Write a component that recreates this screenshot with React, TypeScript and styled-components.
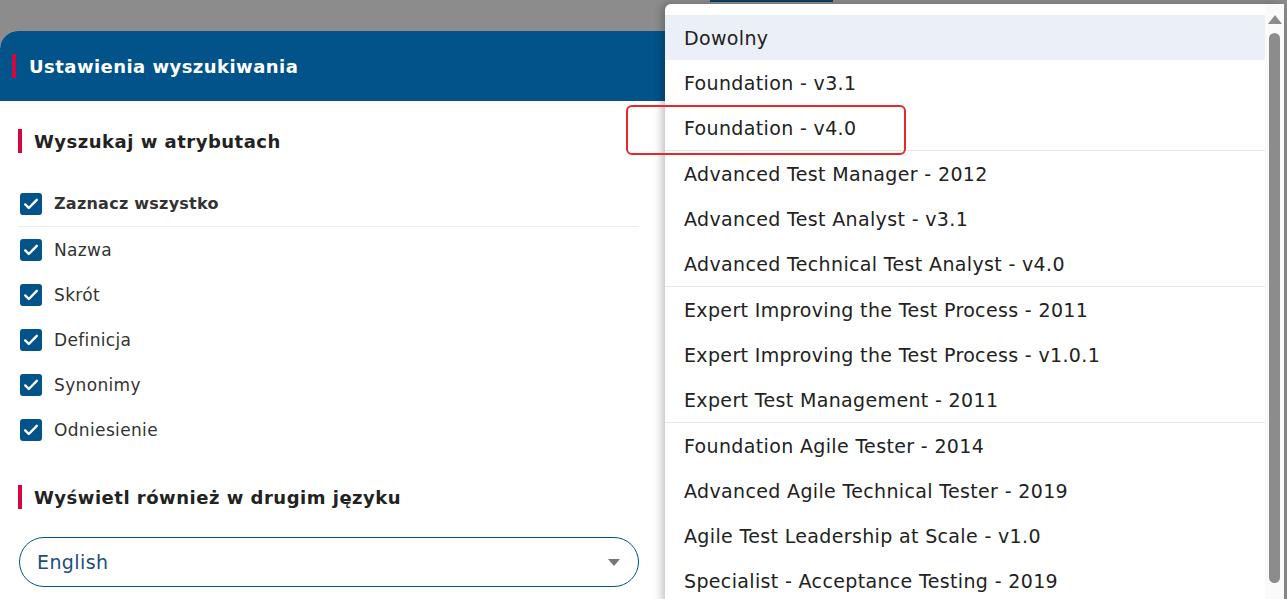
import React from "react";
import styled, { createGlobalStyle } from "styled-components";

const Global = createGlobalStyle`
  html, body { margin: 0; padding: 0; }
  body { font-family: "DejaVu Sans", "Noto Sans", sans-serif; overflow: hidden; }
  * { box-sizing: border-box; }
`;

const Page = styled.div`
  position: relative;
  width: 1287px;
  height: 599px;
  overflow: hidden;
  background: #8c8c8c;
  padding-top: 31px;
`;

const TopStrip = styled.div`
  position: absolute;
  left: 710px;
  top: 0;
  width: 123px;
  height: 2px;
  background: #0b3f63;
`;

const Panel = styled.section`
  width: 1284px;
  height: 568px;
  background: #ffffff;
  border-top-left-radius: 18px;
  overflow: hidden;
  display: flex;
  flex-direction: column;
`;

const PanelHeader = styled.header`
  height: 70px;
  background: #01538a;
  display: flex;
  align-items: center;
  padding-left: 12px;
  gap: 13px;
`;

const Accent = styled.span`
  display: block;
  width: 4px;
  height: 24px;
  background: #d4083f;
  flex: none;
`;

const PanelTitle = styled.h1`
  margin: 0;
  color: #fff;
  font-size: 18px;
  font-weight: 700;
  letter-spacing: 0.45px;
`;

const Body = styled.div`
  width: 657px;
  padding: 0 18px;
  display: flex;
  flex-direction: column;
`;

const SectionHeading = styled.h2<{ $top: number }>`
  margin: ${(p) => p.$top}px 0 0 0;
  height: 24px;
  display: flex;
  align-items: center;
  gap: 12px;
  font-size: 18px;
  font-weight: 700;
  color: #222;
  letter-spacing: 0.5px;
`;

const CheckList = styled.div`
  margin-top: 28px;
  display: flex;
  flex-direction: column;
`;

const CheckRow = styled.label<{ $bold?: boolean; $divider?: boolean }>`
  display: flex;
  align-items: center;
  gap: 12px;
  padding-left: 2px;
  font-size: ${(p) => (p.$bold ? 16 : 17)}px;
  letter-spacing: ${(p) => (p.$bold ? 0.25 : 0.35)}px;
  color: #333;
  font-weight: ${(p) => (p.$bold ? 700 : 400)};
  border-bottom: ${(p) => (p.$divider ? "1px solid #eeeeee" : "none")};
  height: ${(p) => (p.$divider ? 46 : 45)}px;
`;

const Box = styled.span`
  width: 22px;
  height: 22px;
  border-radius: 3px;
  background: #01538a;
  display: flex;
  align-items: center;
  justify-content: center;
  flex: none;
`;

const Select = styled.div`
  margin-top: 28px;
  margin-left: 1px;
  height: 50px;
  width: 620px;
  border: 1px solid #01538a;
  border-radius: 25px;
  display: flex;
  align-items: center;
  justify-content: space-between;
  padding: 0 18px 0 17px;
  color: #1d4e78;
  font-size: 19px;
  letter-spacing: 0.4px;
`;

const Caret = styled.span`
  width: 0;
  height: 0;
  border-left: 6px solid transparent;
  border-right: 6px solid transparent;
  border-top: 7px solid #777;
`;

const Menu = styled.div`
  position: absolute;
  left: 665px;
  top: 4px;
  width: 619px;
  height: 600px;
  background: #fff;
  border-top-left-radius: 6px;
  box-shadow: -3px 0 8px rgba(0, 0, 0, 0.25);
  display: flex;
  overflow: hidden;
`;

const Options = styled.ul`
  list-style: none;
  margin: 0;
  padding: 11px 0 0 0;
  flex: 1;
`;

const Option = styled.li<{ $active?: boolean; $group?: boolean }>`
  height: ${(p) => (p.$group ? 46 : 45)}px;
  border-top: ${(p) => (p.$group ? "1px solid #e6e6e6" : "none")};
  background: ${(p) => (p.$active ? "#ebf0f8" : "transparent")};
  display: flex;
  align-items: center;
  padding-left: 19px;
  font-size: 19px;
  letter-spacing: 0.35px;
  color: #222;
  white-space: nowrap;
`;

const Track = styled.div`
  width: 19px;
  flex: none;
  background: #fafafa;
  display: flex;
  flex-direction: column;
  align-items: center;
  padding-top: 11px;
`;

const UpArrow = styled.span`
  width: 0;
  height: 0;
  border-left: 7px solid transparent;
  border-right: 7px solid transparent;
  border-bottom: 9px solid #8c8c8c;
`;

const Thumb = styled.span`
  margin-top: 9px;
  width: 11px;
  height: 550px;
  border-radius: 6px;
  background: #8c8c8c;
`;

const Annotation = styled.div`
  position: absolute;
  left: 626px;
  top: 105px;
  width: 280px;
  height: 50px;
  border: 2px solid #e8262b;
  border-radius: 6px;
  pointer-events: none;
`;

const Check = () => (
  <svg width="18" height="18" viewBox="0 0 18 18">
    <path d="M3.2 9.4l3.6 3.6L14.8 4.8" fill="none" stroke="#fff" strokeWidth="2.4" strokeLinecap="round" strokeLinejoin="round" />
  </svg>
);

const attrs = ["Nazwa", "Skrót", "Definicja", "Synonimy", "Odniesienie"];

const options: { label: string; group?: boolean; active?: boolean }[] = [
  { label: "Dowolny", active: true },
  { label: "Foundation - v3.1" },
  { label: "Foundation - v4.0" },
  { label: "Advanced Test Manager - 2012", group: true },
  { label: "Advanced Test Analyst - v3.1" },
  { label: "Advanced Technical Test Analyst - v4.0" },
  { label: "Expert Improving the Test Process - 2011", group: true },
  { label: "Expert Improving the Test Process - v1.0.1" },
  { label: "Expert Test Management - 2011" },
  { label: "Foundation Agile Tester - 2014", group: true },
  { label: "Advanced Agile Technical Tester - 2019" },
  { label: "Agile Test Leadership at Scale - v1.0" },
  { label: "Specialist - Acceptance Testing - 2019" },
];

export default function App() {
  return (
    <>
      <Global />
      <Page>
        <TopStrip />
        <Panel>
          <PanelHeader>
            <Accent />
            <PanelTitle>Ustawienia wyszukiwania</PanelTitle>
          </PanelHeader>
          <Body>
            <SectionHeading $top={28}>
              <Accent />
              Wyszukaj w atrybutach
            </SectionHeading>
            <CheckList>
              <CheckRow $bold $divider>
                <Box><Check /></Box>
                Zaznacz wszystko
              </CheckRow>
              {attrs.map((a) => (
                <CheckRow key={a}>
                  <Box><Check /></Box>
                  {a}
                </CheckRow>
              ))}
            </CheckList>
            <SectionHeading $top={33}>
              <Accent />
              Wyświetl również w drugim języku
            </SectionHeading>
            <Select>
              English
              <Caret />
            </Select>
          </Body>
        </Panel>
        <Menu>
          <Options>
            {options.map((o) => (
              <Option key={o.label} $active={o.active} $group={o.group}>
                {o.label}
              </Option>
            ))}
          </Options>
          <Track>
            <UpArrow />
            <Thumb />
          </Track>
        </Menu>
        <Annotation />
      </Page>
    </>
  );
}
